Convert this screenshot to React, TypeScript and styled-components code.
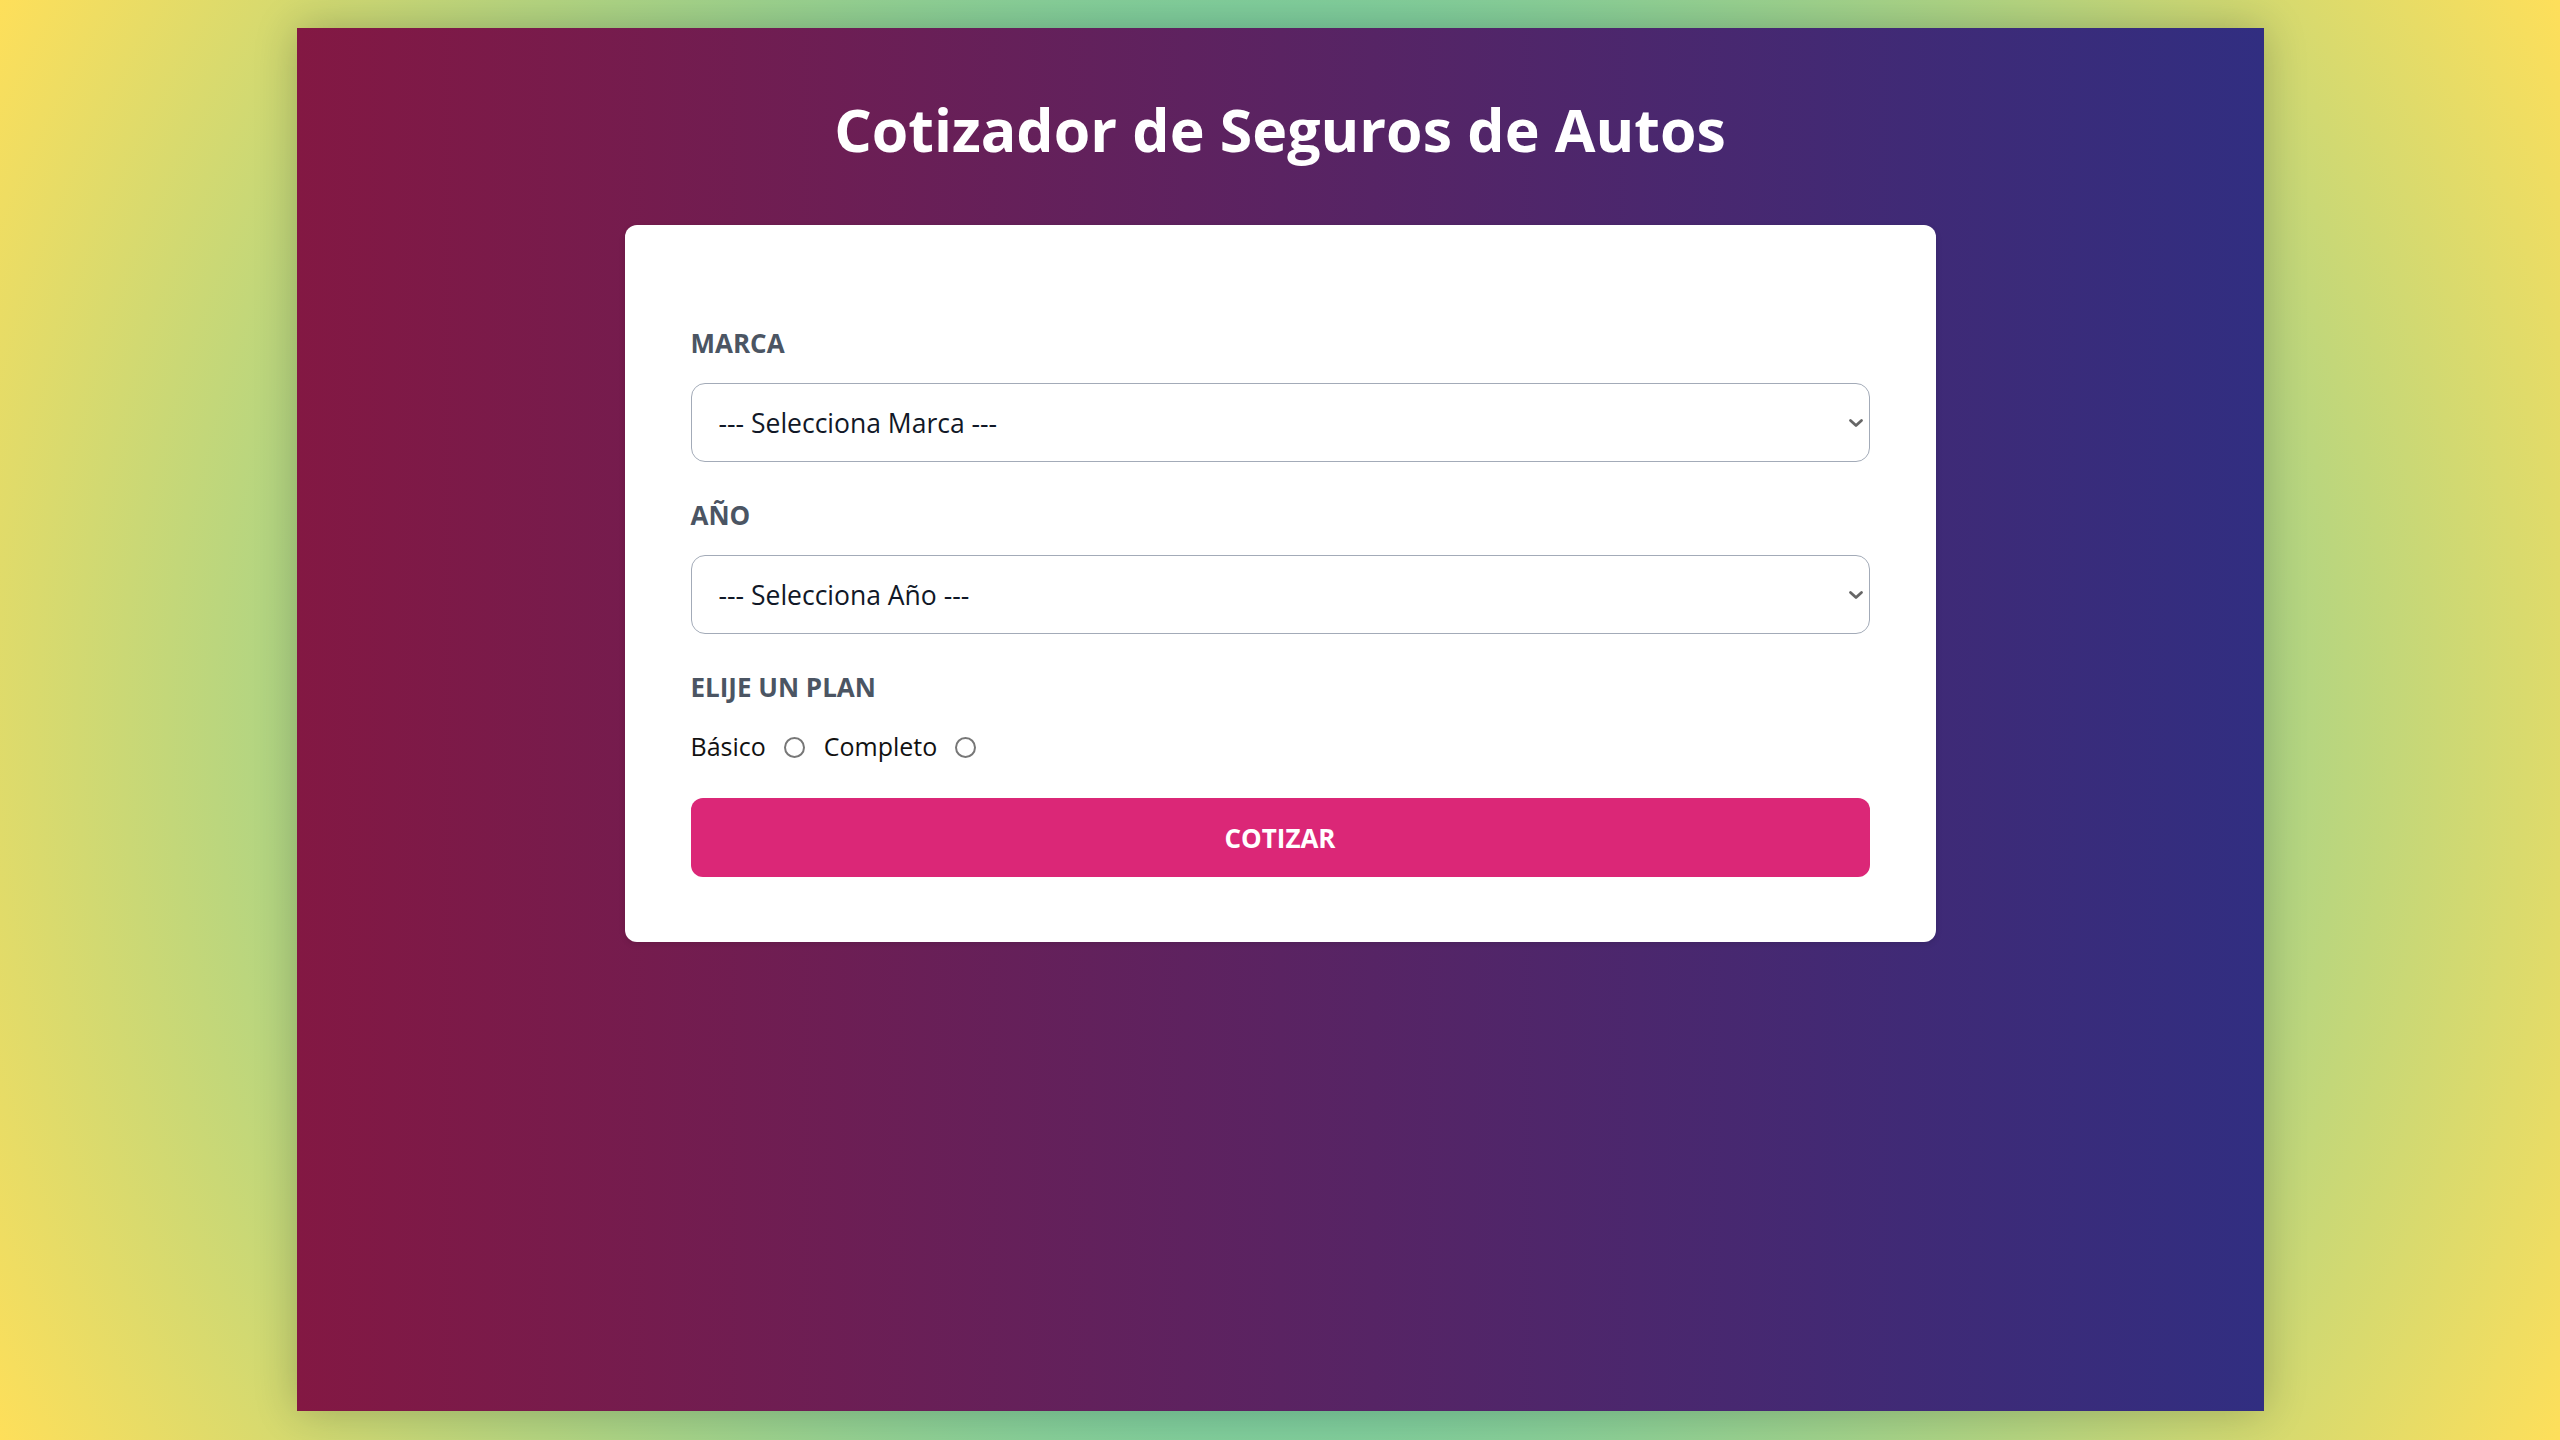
import styled, { createGlobalStyle } from 'styled-components';

const GlobalStyle = createGlobalStyle`
  * {
    box-sizing: border-box;
  }

  body {
    margin: 0;
    min-height: 100vh;
    font-family: 'Open Sans', sans-serif;
    background: radial-gradient(circle, rgb(10, 190, 218) 0%, rgb(254, 223, 90) 100%);
  }
`;

const Page = styled.div`
  padding: 28px 0 29px;
`;

const Container = styled.div`
  width: 1967px;
  min-height: 1383px;
  margin: 0 auto;
  padding-top: 64px;
  background: linear-gradient(90deg, #831843 0%, #312e81 100%);
  box-shadow: 0 0 40px rgba(0, 0, 0, 0.22);
`;

const Title = styled.h1`
  margin: 0 0 59px;
  font-size: 59px;
  line-height: 74px;
  font-weight: 700;
  color: #ffffff;
  text-align: center;
`;

const Card = styled.main`
  width: 1311px;
  margin: 0 auto;
  padding: 97px 66px 65px;
  background: #ffffff;
  border-radius: 12px;
  box-shadow: 0 2px 6px rgba(0, 0, 0, 0.12);
`;

const Field = styled.div`
  display: flex;
  flex-direction: column;
  margin-bottom: 32px;
`;

const Label = styled.label<{ $gap?: number }>`
  margin-bottom: ${({ $gap }) => $gap ?? 19}px;
  font-size: 26px;
  line-height: 42px;
  font-weight: 700;
  color: #4b5563;
  text-transform: uppercase;
`;

const SelectWrap = styled.div`
  position: relative;
`;

const Select = styled.select`
  appearance: none;
  width: 100%;
  height: 79px;
  padding: 0 60px 0 27px;
  font-family: inherit;
  font-size: 26.5px;
  color: #111827;
  background: #ffffff;
  border: 1px solid #a3abb8;
  border-radius: 14px;
  outline: none;
`;

const Chevron = styled.svg`
  position: absolute;
  top: 50%;
  right: 6px;
  width: 16px;
  height: 10px;
  transform: translateY(-50%);
  pointer-events: none;
`;

const PlanRow = styled.div`
  display: flex;
  align-items: center;
  font-size: 25px;
  line-height: 40px;
  color: #111111;
`;

const PlanOption = styled.label`
  display: flex;
  align-items: center;
  gap: 18px;
  margin-right: 19px;
`;

const Radio = styled.input`
  appearance: none;
  width: 21px;
  height: 21px;
  margin: 2px 0 0;
  border: 2px solid #777777;
  border-radius: 50%;
  background: #ffffff;
`;

const SubmitButton = styled.button`
  display: block;
  width: 100%;
  height: 79px;
  padding: 0;
  font-family: inherit;
  font-size: 26px;
  line-height: 40px;
  font-weight: 700;
  color: #ffffff;
  text-transform: uppercase;
  background: #db2777;
  border: none;
  border-radius: 12px;
  cursor: pointer;
`;

const ChevronIcon = () => (
  <Chevron viewBox='0 0 16 10'>
    <polyline
      points='2.5,2.5 8,7.5 13.5,2.5'
      fill='none'
      stroke='#666666'
      strokeWidth='2.8'
      strokeLinecap='round'
      strokeLinejoin='round'
    />
  </Chevron>
);

const App = (): JSX.Element => (
  <>
    <GlobalStyle />
    <Page>
      <Container>
        <Title>Cotizador de Seguros de Autos</Title>
        <Card>
          <form onSubmit={e => e.preventDefault()}>
            <Field>
              <Label htmlFor='marca'>Marca</Label>
              <SelectWrap>
                <Select id='marca' defaultValue=''>
                  <option value=''>--- Selecciona Marca ---</option>
                  <option value='1'>Europeo</option>
                  <option value='2'>Americano</option>
                  <option value='3'>Asiático</option>
                </Select>
                <ChevronIcon />
              </SelectWrap>
            </Field>
            <Field>
              <Label htmlFor='year'>Año</Label>
              <SelectWrap>
                <Select id='year' defaultValue=''>
                  <option value=''>--- Selecciona Año ---</option>
                  <option value='2024'>2024</option>
                  <option value='2023'>2023</option>
                  <option value='2022'>2022</option>
                </Select>
                <ChevronIcon />
              </SelectWrap>
            </Field>
            <Field>
              <Label as='span' $gap={18}>
                Elije un Plan
              </Label>
              <PlanRow>
                <PlanOption>
                  Básico
                  <Radio type='radio' name='plan' value='1' />
                </PlanOption>
                <PlanOption>
                  Completo
                  <Radio type='radio' name='plan' value='2' />
                </PlanOption>
              </PlanRow>
            </Field>
            <SubmitButton type='submit'>Cotizar</SubmitButton>
          </form>
        </Card>
      </Container>
    </Page>
  </>
);

export default App;
